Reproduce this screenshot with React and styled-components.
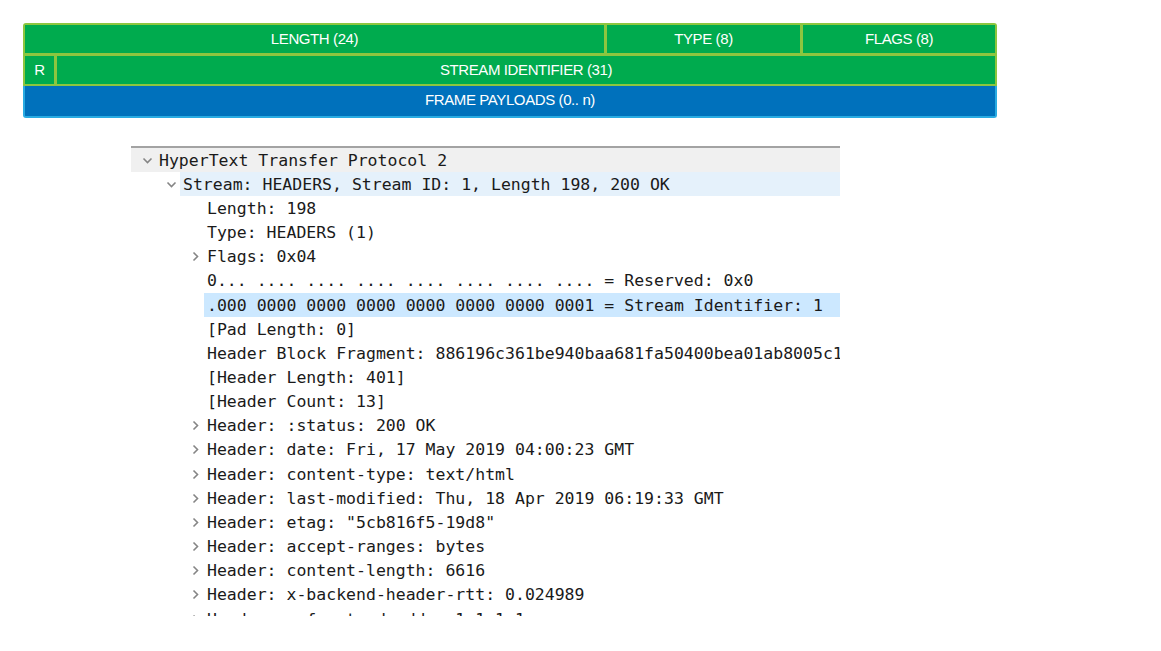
import React from 'react';
import styled, { createGlobalStyle } from 'styled-components';

const GlobalStyle = createGlobalStyle`
  html, body {
    margin: 0;
    padding: 0;
    background: #ffffff;
  }
  * {
    box-sizing: border-box;
  }
`;

const Page = styled.div`
  display: flex;
  flex-direction: column;
  padding: 23px 0 0 23px;
`;

const Frame = styled.div`
  width: 974px;
  display: flex;
  flex-direction: column;
  font-family: "Liberation Sans", Arial, sans-serif;
  font-size: 15px;
  letter-spacing: -0.4px;
  color: #ffffff;
`;

const GreenBlock = styled.div`
  display: grid;
  grid-template-columns: 29px 547px 193px 192px;
  grid-template-rows: 28px 28px;
  gap: 3px;
  padding: 2px;
  background: #8dc63f;
  border-radius: 3px 3px 0 0;
`;

const Cell = styled.div`
  grid-column: ${(p) => p.span};
  background: #00ab4e;
  display: flex;
  align-items: center;
  justify-content: center;
  padding-bottom: 1px;
`;

const Payload = styled.div`
  height: 32px;
  background: #0071bc;
  border: 2px solid #29abe2;
  border-top: none;
  border-radius: 0 0 3px 3px;
  display: flex;
  align-items: center;
  justify-content: center;
  padding-bottom: 3px;
`;

const Tree = styled.div`
  margin: 28px 0 0 108px;
  width: 709px;
  height: 470px;
  overflow: hidden;
  border-top: 2px solid #a3a3a3;
  font-family: "DejaVu Sans Mono", "Liberation Mono", monospace;
  font-size: 16.5px;
  color: #1a1a1a;
`;

const Row = styled.div`
  display: flex;
  align-items: center;
  height: 24.17px;
  padding-left: ${(p) => 11 + p.level * 24}px;
  background: ${(p) => (p.hover ? '#f0f0f0' : 'transparent')};
  white-space: nowrap;
`;

const Toggle = styled.span`
  width: 14px;
  flex: none;
  display: flex;
  align-items: center;
  color: #858585;
`;

const Label = styled.span`
  flex: 1;
  height: 100%;
  display: flex;
  align-items: center;
  padding-left: 3px;
  background: ${(p) =>
    p.tone === 'selected' ? '#cce8ff' : p.tone === 'focus' ? '#e5f1fb' : 'transparent'};
`;

function Chevron({ open }) {
  if (open) {
    return (
      <svg width="11" height="11" viewBox="0 0 11 11">
        <path d="M1.5 3.5 L5.5 7.5 L9.5 3.5" fill="none" stroke="currentColor" strokeWidth="1.6" />
      </svg>
    );
  }
  return (
    <svg width="11" height="11" viewBox="0 0 11 11">
      <path d="M3.5 1.5 L7.5 5.5 L3.5 9.5" fill="none" stroke="currentColor" strokeWidth="1.6" />
    </svg>
  );
}

const rows = [
  { level: 0, toggle: 'open', text: 'HyperText Transfer Protocol 2', hover: true },
  { level: 1, toggle: 'open', text: 'Stream: HEADERS, Stream ID: 1, Length 198, 200 OK', tone: 'focus' },
  { level: 2, text: 'Length: 198' },
  { level: 2, text: 'Type: HEADERS (1)' },
  { level: 2, toggle: 'closed', text: 'Flags: 0x04' },
  { level: 2, text: '0... .... .... .... .... .... .... .... = Reserved: 0x0' },
  { level: 2, text: '.000 0000 0000 0000 0000 0000 0000 0001 = Stream Identifier: 1', tone: 'selected' },
  { level: 2, text: '[Pad Length: 0]' },
  { level: 2, text: 'Header Block Fragment: 886196c361be940baa681fa50400bea01ab8005c1b9e...' },
  { level: 2, text: '[Header Length: 401]' },
  { level: 2, text: '[Header Count: 13]' },
  { level: 2, toggle: 'closed', text: 'Header: :status: 200 OK' },
  { level: 2, toggle: 'closed', text: 'Header: date: Fri, 17 May 2019 04:00:23 GMT' },
  { level: 2, toggle: 'closed', text: 'Header: content-type: text/html' },
  { level: 2, toggle: 'closed', text: 'Header: last-modified: Thu, 18 Apr 2019 06:19:33 GMT' },
  { level: 2, toggle: 'closed', text: 'Header: etag: "5cb816f5-19d8"' },
  { level: 2, toggle: 'closed', text: 'Header: accept-ranges: bytes' },
  { level: 2, toggle: 'closed', text: 'Header: content-length: 6616' },
  { level: 2, toggle: 'closed', text: 'Header: x-backend-header-rtt: 0.024989' },
  { level: 2, toggle: 'closed', text: 'Header: x-frontend-addr: 1.1.1.1' },
];

export default function App() {
  return (
    <Page>
      <GlobalStyle />
      <Frame>
        <GreenBlock>
          <Cell span="1 / 3">LENGTH (24)</Cell>
          <Cell span="3 / 4">TYPE (8)</Cell>
          <Cell span="4 / 5">FLAGS (8)</Cell>
          <Cell span="1 / 2">R</Cell>
          <Cell span="2 / 5">STREAM IDENTIFIER (31)</Cell>
        </GreenBlock>
        <Payload>FRAME PAYLOADS (0.. n)</Payload>
      </Frame>
      <Tree>
        {rows.map((r, i) => (
          <Row key={i} level={r.level} hover={r.hover}>
            <Toggle>{r.toggle && <Chevron open={r.toggle === 'open'} />}</Toggle>
            <Label tone={r.tone}>{r.text}</Label>
          </Row>
        ))}
      </Tree>
    </Page>
  );
}
